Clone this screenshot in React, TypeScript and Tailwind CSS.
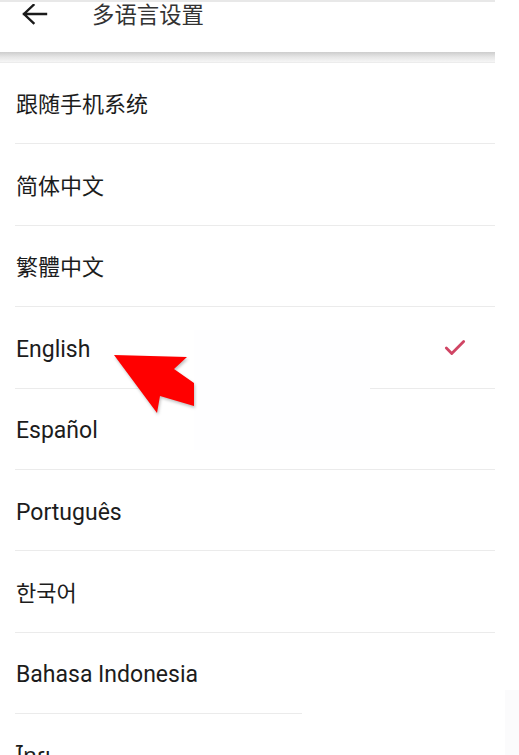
import { Check } from "lucide-react";

const LANGS = [
  { label: "跟随手机系统", cjk: true },
  { label: "简体中文", cjk: true },
  { label: "繁體中文", cjk: true },
  { label: "English", selected: true },
  { label: "Español" },
  { label: "Português" },
  { label: "한국어", cjk: true },
  { label: "Bahasa Indonesia", short: true },
  { label: "ไทย", last: true },
];

export default function App() {
  return (
    <div
      className="relative w-[519px] h-[755px] overflow-hidden bg-white text-[#1c1c1c]"
      style={{ fontFamily: "Roboto, 'Noto Sans CJK SC', 'Noto Sans Thai', sans-serif" }}
    >
      <div className="w-[495px]">
        {/* Header */}
        <header className="h-[52px] border-t-2 border-[#e8e8e8] flex items-start">
          <svg className="mt-[2px] ml-[21px] w-[28px] h-[22px]" viewBox="0 0 28 22" fill="none">
            <path d="M3 10H25M12.5 1L3 10L12.5 19" stroke="#1a1a1a" strokeWidth="2.4" strokeLinecap="square" />
          </svg>
          <h1 className="ml-[43px] -mt-[2px] text-[22.4px] leading-[30px] text-[#333]">多语言设置</h1>
        </header>
        <div className="h-[10px] bg-gradient-to-b from-[#cdcdcd] via-[#e6e6e6] to-[#f6f6f6]" />
        <div className="h-[1px] bg-[#ececec]" />

        {/* Language list */}
        <ul>
          {LANGS.map((lang) => (
            <li key={lang.label} className="h-[81.4px] pl-[16px] pt-[3px] flex items-center relative">
              <span className={`${lang.cjk ? "text-[22px]" : "text-[23px]"} leading-none`}>{lang.label}</span>
              {lang.selected && (
                <Check className="ml-auto mr-[27px] -mt-[3px] w-[26px] h-[26px] text-[#d04564]" strokeWidth={2.6} />
              )}
              {!lang.last && (
                <div
                  className={`absolute bottom-0 left-[15px] h-[1px] bg-[#ebebeb] ${lang.short ? "w-[287px]" : "right-0"}`}
                />
              )}
            </li>
          ))}
        </ul>
      </div>

      {/* annotation patch + arrow */}
      <div className="absolute left-[194px] top-[330px] w-[176px] h-[120px] bg-[#fefeff]" />
      <div className="absolute left-[505px] top-[690px] w-[14px] h-[65px] bg-[#fbfbfc]" />
      <svg className="absolute left-0 top-0" width="519" height="755" viewBox="0 0 519 755">
        <polygon
          points="114,355 187,357 174,369 194,383 194,406 160,396 157,413"
          fill="#ff0000"
          style={{ filter: "drop-shadow(1px 2px 1.5px rgba(0,0,0,0.25))" }}
        />
      </svg>
    </div>
  );
}
